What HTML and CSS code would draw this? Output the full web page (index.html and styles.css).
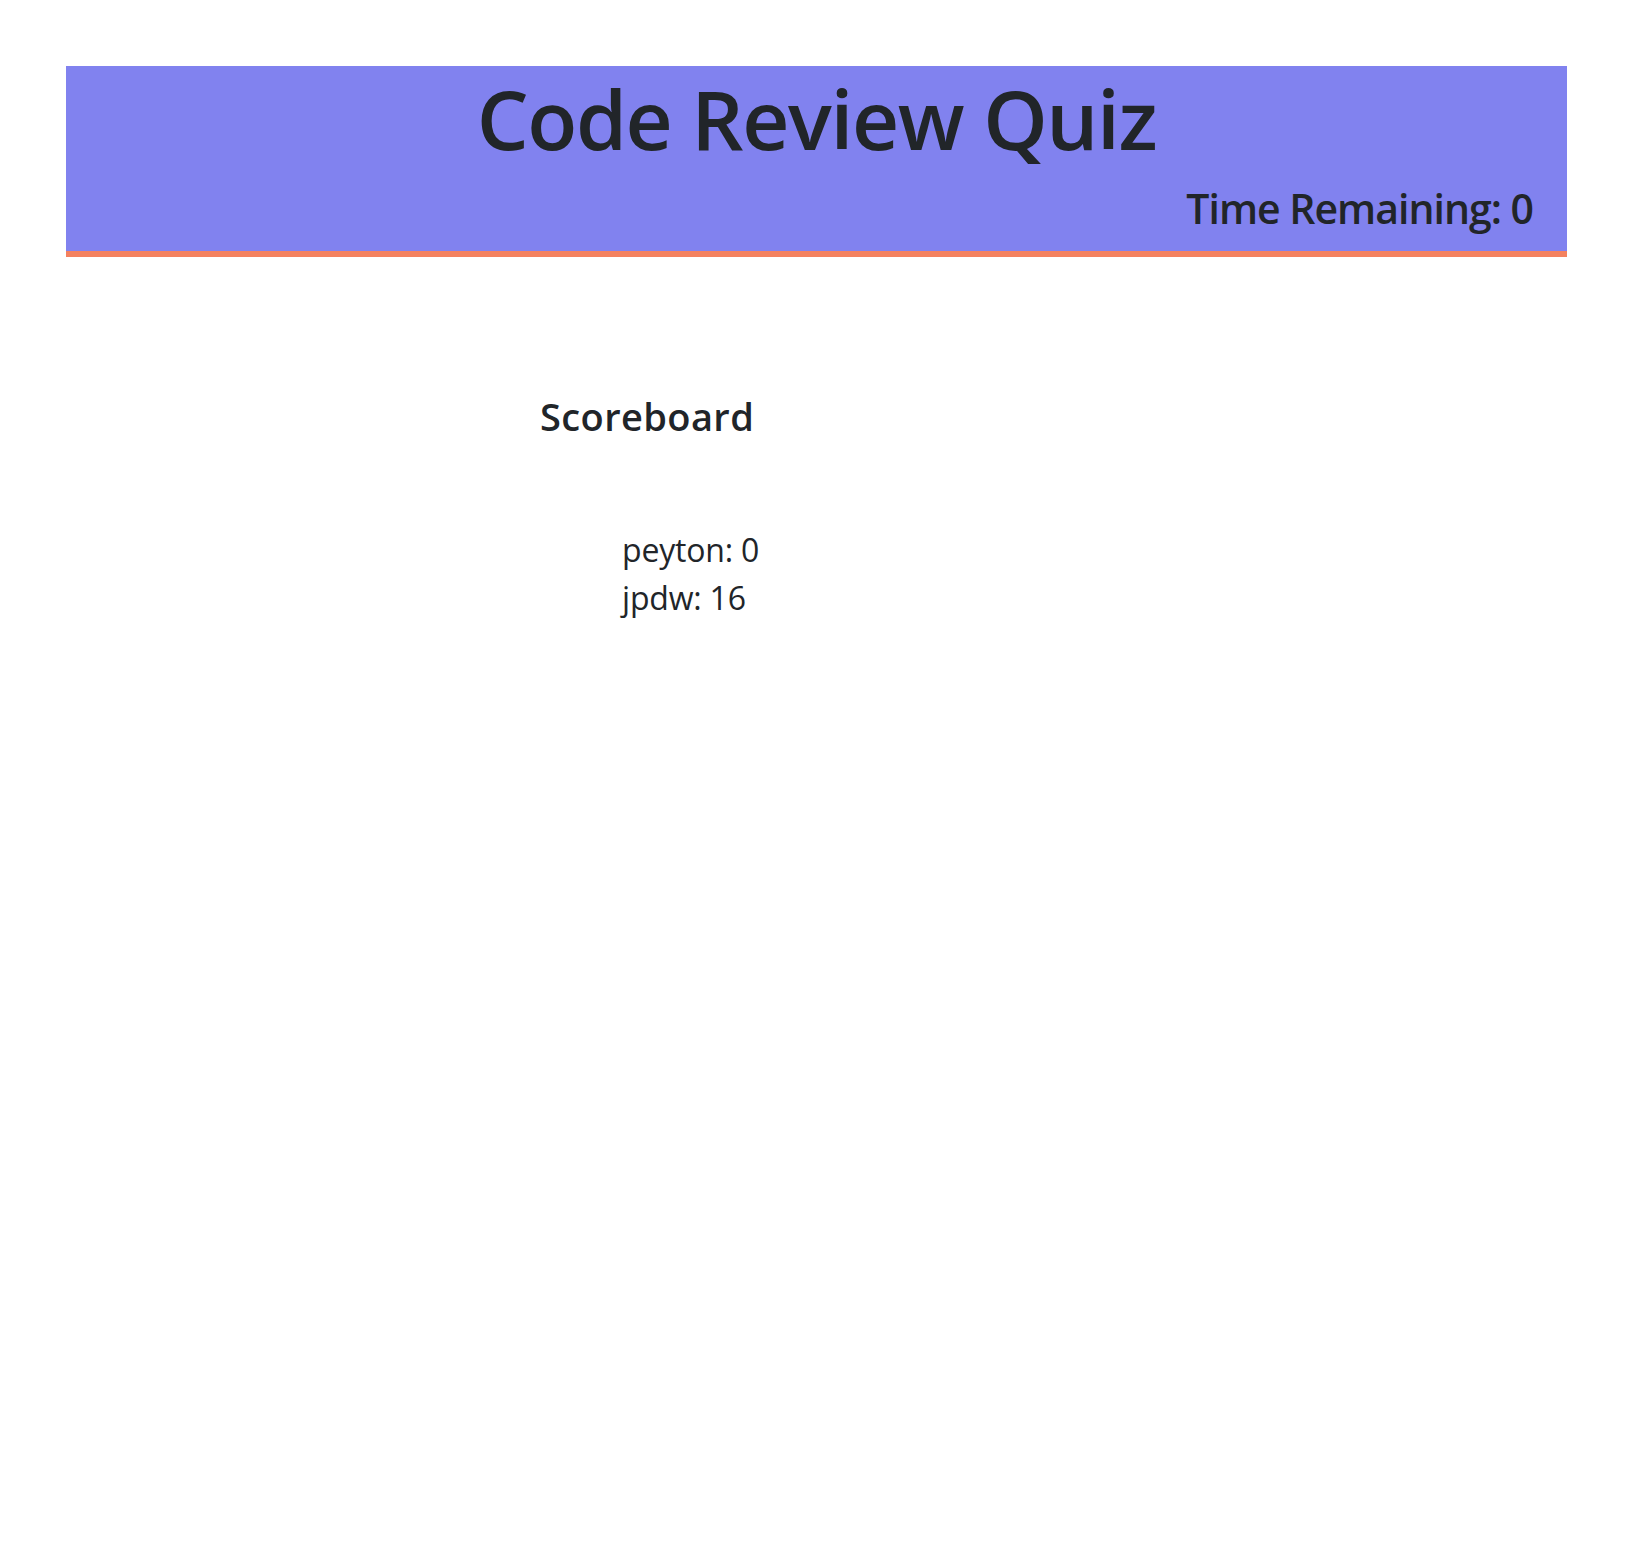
FILE: index.html
```html
<!DOCTYPE html>
<html lang="en">
<head>
<meta charset="utf-8">
<title>Code Review Quiz</title>
<link rel="stylesheet" href="styles.css">
</head>
<body>
<header class="header">
  <h1 class="title">Code Review Quiz</h1>
  <div class="timer">Time Remaining: <span class="time">0</span></div>
</header>
<main class="main">
  <section class="scoreboard">
    <h2 class="scoreboard-title">Scoreboard</h2>
    <ul class="score-list">
      <li class="score">peyton: 0</li>
      <li class="score">jpdw: 16</li>
    </ul>
  </section>
</main>
</body>
</html>
```
FILE: styles.css
```css
html, body {
  margin: 0;
  padding: 0;
  background: #fff;
}
body {
  font-family: "Open Sans", "Noto Sans", "DejaVu Sans", sans-serif;
  color: #212529;
}
.header {
  margin: 66px 0 0 66px;
  width: 1501px;
  background: #8182ef;
  border-bottom: 6px solid #f4815f;
  box-sizing: border-box;
  height: 191px;
  display: flex;
  flex-direction: column;
}
.title {
  margin: 0;
  font-size: 82px;
  font-weight: 600;
  letter-spacing: -1.4px;
  line-height: 1;
  text-align: center;
  padding-top: 11px;
}
.timer {
  margin-top: auto;
  margin-bottom: 22px;
  padding-right: 34px;
  text-align: right;
  font-size: 41px;
  font-weight: 600;
  letter-spacing: -1px;
  line-height: 1;
}
.main {
  display: flex;
  padding-left: 540px;
}
.scoreboard {
  display: flex;
  flex-direction: column;
}
.scoreboard-title {
  margin: 137px 0 0 0;
  font-size: 38px;
  font-weight: 600;
  letter-spacing: 0.4px;
  line-height: 1.2;
}
.score-list {
  list-style: none;
  margin: 86px 0 0 0;
  padding: 0 0 0 82px;
}
.score {
  font-size: 32px;
  line-height: 48px;
  letter-spacing: -0.2px;
}
```
